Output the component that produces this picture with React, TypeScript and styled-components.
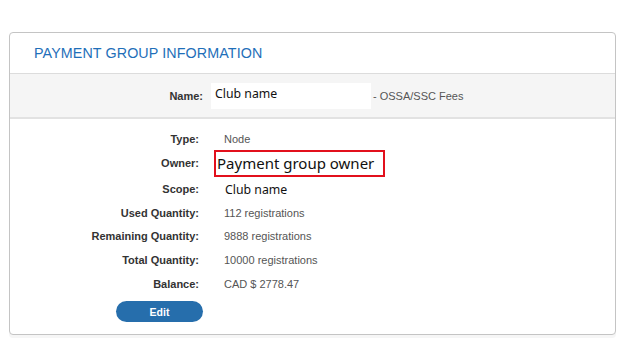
import styled, { createGlobalStyle } from "styled-components";

const GlobalStyle = createGlobalStyle`
  html, body {
    margin: 0;
    padding: 0;
    background: #ffffff;
    font-family: "Liberation Sans", Arial, sans-serif;
  }
`;

const details = [
  { label: "Type:", value: "Node", h: 20 },
  { label: "Owner:", value: "Payment group owner", h: 28, kind: "owner" },
  { label: "Scope:", value: "Club name", h: 24, kind: "plain" },
  { label: "Used Quantity:", value: "112 registrations", h: 23 },
  { label: "Remaining Quantity:", value: "9888 registrations", h: 24 },
  { label: "Total Quantity:", value: "10000 registrations", h: 24 },
  { label: "Balance:", value: "CAD $ 2778.47", h: 24 },
];

const App = () => {
  return (
    <Page>
      <GlobalStyle />
      <Card>
        <Header>
          <Title>PAYMENT GROUP INFORMATION</Title>
        </Header>

        <NameRow>
          <NameLabel>Name:</NameLabel>
          <NameInput>Club name</NameInput>
          <Suffix>- OSSA/SSC Fees</Suffix>
        </NameRow>

        <Details>
          {details.map((d) => (
            <Row key={d.label} $h={d.h}>
              <Label>{d.label}</Label>
              {d.kind === "owner" ? (
                <OwnerBox>{d.value}</OwnerBox>
              ) : d.kind === "plain" ? (
                <PlainValue>{d.value}</PlainValue>
              ) : (
                <Value>{d.value}</Value>
              )}
            </Row>
          ))}
          <EditButton>Edit</EditButton>
        </Details>
      </Card>
    </Page>
  );
};

export default App;

/* ================= STYLES ================= */

const Page = styled.div`
  padding: 32px 8px 0 9px;
  width: 624px;
  height: 348px;
  box-sizing: border-box;
`;

const Card = styled.div`
  width: 607px;
  height: 303px;
  box-sizing: border-box;
  border: 1px solid #c4c4c4;
  border-radius: 4px;
  background: #ffffff;
  box-shadow: 0 3px 0 #f6f6f6;
  overflow: hidden;
`;

const Header = styled.div`
  height: 40px;
  display: flex;
  align-items: center;
  padding-left: 24px;
  border-bottom: 1px solid #dcdcdc;
`;

const Title = styled.h2`
  margin: 0;
  font-size: 14.3px;
  font-weight: 400;
  color: #1f6fb9;
  letter-spacing: 0.1px;
`;

const NameRow = styled.div`
  height: 43px;
  display: flex;
  align-items: center;
  background: #f5f5f5;
  border-bottom: 2px solid #e2e2e2;
`;

const NameLabel = styled.span`
  width: 193px;
  text-align: right;
  font-size: 11px;
  font-weight: 700;
  color: #333333;
`;

const NameInput = styled.div`
  margin-left: 8px;
  width: 160px;
  height: 26px;
  box-sizing: border-box;
  padding: 2px 4px 0;
  background: #ffffff;
  font-family: "Noto Sans", "Open Sans", sans-serif;
  font-size: 12.3px;
  line-height: 18px;
  color: #111111;
`;

const Suffix = styled.span`
  margin-left: 2px;
  font-size: 11px;
  color: #555555;
`;

const Details = styled.div`
  padding-top: 10px;
  display: flex;
  flex-direction: column;
`;

const Row = styled.div<{ $h: number }>`
  height: ${(p) => p.$h}px;
  display: grid;
  grid-template-columns: 189px 1fr;
  column-gap: 25px;
  align-items: center;
`;

const Label = styled.span`
  text-align: right;
  font-size: 11px;
  font-weight: 700;
  color: #333333;
`;

const Value = styled.span`
  font-size: 11px;
  color: #555555;
`;

const PlainValue = styled.span`
  margin-left: 1px;
  font-family: "Noto Sans", "Open Sans", sans-serif;
  font-size: 12.3px;
  color: #111111;
`;

const OwnerBox = styled.div`
  margin-left: -10px;
  width: 171px;
  height: 27px;
  box-sizing: border-box;
  border: 2px solid #e2101c;
  padding-left: 1px;
  display: flex;
  align-items: center;
  font-family: "Noto Sans", "Open Sans", sans-serif;
  font-size: 15px;
  color: #111111;
  white-space: nowrap;
`;

const EditButton = styled.button`
  margin: 5px 0 0 106px;
  width: 87px;
  height: 21px;
  border: none;
  border-radius: 11px;
  background: #266eac;
  color: #ffffff;
  font-family: "Liberation Sans", Arial, sans-serif;
  font-size: 10.5px;
  font-weight: 700;
  cursor: pointer;
`;
